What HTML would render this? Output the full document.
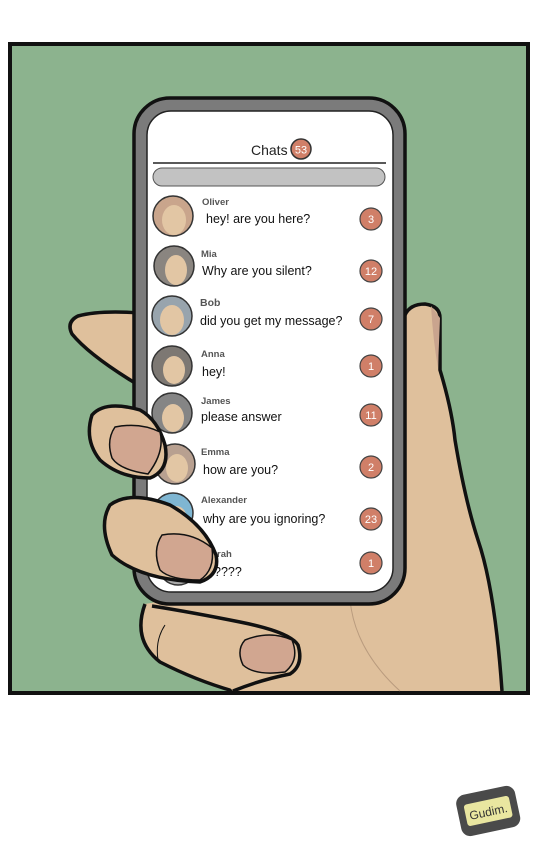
<!DOCTYPE html>
<html><head><meta charset="utf-8"><style>
html,body{margin:0;padding:0;background:#fff;width:540px;height:856px;overflow:hidden}
svg{display:block}
text{font-family:"Liberation Sans",Arial,sans-serif}
</style></head><body>
<svg width="540" height="856" viewBox="0 0 540 856" xmlns="http://www.w3.org/2000/svg">
<rect x="0" y="0" width="540" height="856" fill="#fff"/>
<rect x="10" y="44" width="518" height="649" fill="#8cb38e" stroke="#111" stroke-width="4"/>
<path d="M400 320 Q405 304 425 304 Q440 306 440 318 L440 370 Q452 410 455 440 Q465 500 478 540 Q495 590 502 691 L233 691 Q195 680 160 662 Q135 640 145 604 L400 560 Z" fill="#dfc09c"/>
<path d="M405 315 Q410 304 425 304 Q440 306 440 318 L440 370 Q452 410 455 440 Q465 500 478 540 Q495 590 502 691" fill="none" stroke="#111" stroke-width="3.5"/>
<path d="M431 306 Q433 340 438 368 L440 318 Z" fill="#c9a48e"/>
<path d="M350 600 Q355 650 400 691" fill="none" stroke="#b99b7e" stroke-width="1"/>
<path d="M145 604 Q132 640 160 662 Q195 680 233 691" fill="none" stroke="#111" stroke-width="3.5"/>
<path d="M140 313 Q100 310 78 316 Q66 322 72 334 Q90 356 140 386 Z" fill="#dfc09c" stroke="#111" stroke-width="3.5"/>
<rect x="134" y="98" width="271" height="506" rx="36" fill="#7b7b7b" stroke="#111" stroke-width="3.5"/>
<rect x="147" y="111" width="246" height="481" rx="24" fill="#fff" stroke="#222" stroke-width="1.5"/>
<text x="251" y="155" font-size="14" fill="#222">Chats</text>
<circle cx="301" cy="149" r="10" fill="#d07f68" stroke="#333" stroke-width="1.5"/>
<text x="301" y="153.5" font-size="11" fill="#fff" text-anchor="middle">53</text>
<line x1="153" y1="163" x2="386" y2="163" stroke="#222" stroke-width="1.5"/>
<rect x="153" y="168" width="232" height="18" rx="9" fill="#c2c2c2" stroke="#555" stroke-width="1"/>
<g font-size="12.5" fill="#111">
<g font-size="9.5" font-weight="bold" fill="#555">
<text x="202" y="205">Oliver</text><text x="201" y="257">Mia</text><text x="200" y="306" font-size="10.5">Bob</text><text x="201" y="357">Anna</text><text x="201" y="404">James</text><text x="201" y="455">Emma</text><text x="201" y="503">Alexander</text><text x="217" y="557">rah</text>
</g>
<text x="206" y="223">hey! are you here?</text>
<text x="202" y="275">Why are you silent?</text>
<text x="200" y="325">did you get my message?</text>
<text x="202" y="376">hey!</text>
<text x="201" y="421">please answer</text>
<text x="203" y="474">how are you?</text>
<text x="203" y="523">why are you ignoring?</text>
<text x="214" y="576">????</text>
</g>
<g stroke="#333" stroke-width="1.5">
<circle cx="173" cy="216" r="20" fill="#c9a58c"/>
<circle cx="174" cy="266" r="20" fill="#8a8580"/>
<circle cx="172" cy="316" r="20" fill="#98a4ad"/>
<circle cx="172" cy="366" r="20" fill="#7d7873"/>
<circle cx="172" cy="413" r="20" fill="#858585"/>
<circle cx="175" cy="464" r="20" fill="#b8a090"/>
<circle cx="173" cy="513" r="20" fill="#7fb6d2"/>
<circle cx="178" cy="565" r="20" fill="#aaa"/>
</g>
<g fill="#e2c6a4">
<ellipse cx="174" cy="220" rx="12" ry="15"/><ellipse cx="176" cy="270" rx="11" ry="15"/><ellipse cx="172" cy="320" rx="12" ry="15"/><ellipse cx="174" cy="370" rx="11" ry="14"/><ellipse cx="173" cy="418" rx="11" ry="14"/><ellipse cx="177" cy="468" rx="11" ry="14"/><ellipse cx="176" cy="519" rx="11" ry="13"/>
</g>
<g fill="#d07f68" stroke="#444" stroke-width="1.2">
<circle cx="371" cy="219" r="11"/><circle cx="371" cy="271" r="11"/><circle cx="371" cy="319" r="11"/><circle cx="371" cy="366" r="11"/><circle cx="371" cy="415" r="11"/><circle cx="371" cy="467" r="11"/><circle cx="371" cy="519" r="11"/><circle cx="371" cy="563" r="11"/>
</g>
<g font-size="11" fill="#fff" text-anchor="middle">
<text x="371" y="223">3</text><text x="371" y="275">12</text><text x="371" y="323">7</text><text x="371" y="370">1</text><text x="371" y="419">11</text><text x="371" y="471">2</text><text x="371" y="523">23</text><text x="371" y="567">1</text>
</g>
<path d="M152 606 Q190 612 240 622 Q290 632 298 645 Q304 665 290 674 Q260 680 233 691" fill="#dfc09c" stroke="#111" stroke-width="3.5"/>
<path d="M245 640 Q270 630 292 640 Q300 660 285 672 Q255 676 243 665 Q236 650 245 640 Z" fill="#d1a690" stroke="#111" stroke-width="1.5"/>
<path d="M165 625 Q155 640 158 660" fill="none" stroke="#111" stroke-width="1"/>
<path d="M170 505 Q130 490 110 505 Q98 525 112 555 Q140 580 200 582 Q220 575 216 555 Q205 525 170 505 Z" fill="#dfc09c" stroke="#111" stroke-width="3.5"/>
<path d="M162 535 Q190 530 212 548 Q215 570 200 580 Q170 580 160 570 Q152 550 162 535 Z" fill="#d1a690" stroke="#111" stroke-width="1.5"/>
<path d="M140 410 Q105 400 92 415 Q84 440 100 460 Q120 478 150 478 Q170 470 165 445 Q158 420 140 410 Z" fill="#dfc09c" stroke="#111" stroke-width="3.5"/>
<path d="M115 427 Q140 422 160 432 Q165 452 148 474 Q120 470 112 458 Q106 440 115 427 Z" fill="#d1a690" stroke="#111" stroke-width="1.5"/>
<g transform="rotate(-12 488 810)">
<rect x="458" y="790" width="60" height="42" rx="9" fill="#4a4a4a"/>
<rect x="465" y="800" width="46" height="22" rx="3" fill="#e9e6a0"/>
<text x="488" y="816" font-size="12" fill="#333" text-anchor="middle">Gudim.</text>
</g>
</svg>
</body></html>
